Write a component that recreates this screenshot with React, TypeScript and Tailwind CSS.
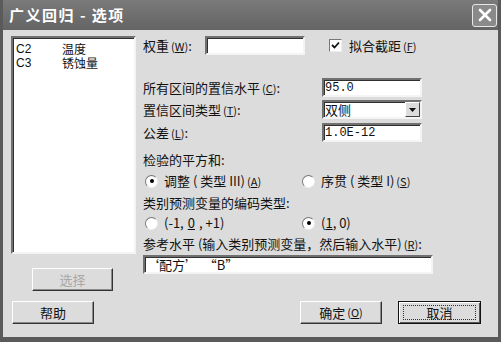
import React from "react";

const font = { fontFamily: '"Noto Sans CJK SC", "Liberation Sans", sans-serif' };

function M({ k }: { k: string }) {
  return (
    <span className="text-[11px] ml-[2px]">
      (<span className="underline">{k}</span>)
    </span>
  );
}

function Sunken({ className = "", children }: { className?: string; children?: React.ReactNode }) {
  return (
    <div
      className={
        "bg-white border-2 border-t-[#707070] border-l-[#707070] border-b-[#f4f4f4] border-r-[#f4f4f4] shadow-[inset_1px_1px_0_#303030] flex items-center " +
        className
      }
    >
      {children}
    </div>
  );
}

function Btn({ children, className = "", def = false, disabled = false }: { children: React.ReactNode; className?: string; def?: boolean; disabled?: boolean }) {
  return (
    <div
      className={
        "h-[23px] flex items-center justify-center text-[13px] bg-[#dcdcdc] " +
        (def
          ? "border border-[#111] shadow-[inset_1px_1px_0_#fff,inset_-1px_-1px_0_#555] "
          : "border border-t-white border-l-white border-b-[#333] border-r-[#333] shadow-[inset_-1px_-1px_0_#8a8a8a] ") +
        (disabled ? "text-[#a8a8a8] " : "text-[#111] ") +
        className
      }
    >
      {def ? (
        <div className="w-[calc(100%-8px)] h-[15px] border border-dotted border-[#333] flex items-center justify-center">{children}</div>
      ) : (
        children
      )}
    </div>
  );
}

function Radio({ on }: { on: boolean }) {
  return (
    <div className="w-[13px] h-[13px] rounded-full bg-white border border-t-[#777] border-l-[#777] border-b-[#eee] border-r-[#eee] flex items-center justify-center mr-[6px]">
      {on && <div className="w-[4px] h-[4px] rounded-full bg-black" />}
    </div>
  );
}

export default function App() {
  return (
    <div className="w-[501px] h-[342px] bg-[#5a5a5a] flex flex-col px-[3px] pb-[5px] text-[#111]" style={font}>
      <div className="h-[30px] shrink-0 flex items-center justify-between pl-[6px] pr-[1px] bg-[linear-gradient(#7a7a7a,#646464)]">
        <span className="text-white text-[15px] font-bold tracking-[1.5px]">广义回归 - 选项</span>
        <div className="w-[25px] h-[23px] rounded-[3px] border border-[#e8e8e8] bg-[#8a8a8a] flex items-center justify-center">
          <svg width="14" height="14" viewBox="0 0 14 14">
            <path d="M2 2 L12 12 M12 2 L2 12" stroke="white" strokeWidth="2.6" strokeLinecap="round" />
          </svg>
        </div>
      </div>
      <div className="flex-1 bg-[#dcdcdc] flex flex-col text-[13px]">
        <div className="flex">
          <div className="flex flex-col pl-[8px] pt-[6px]">
            <Sunken className="w-[125px] h-[218px] !items-start !justify-start flex-col text-[12px] leading-[14px] pt-[4px] pl-[3px]">
              <div className="flex h-[14px]"><span className="w-[46px]" style={{ fontFamily: '"Liberation Sans", sans-serif' }}>C2</span><span>温度</span></div>
              <div className="flex h-[14px]"><span className="w-[46px]" style={{ fontFamily: '"Liberation Sans", sans-serif' }}>C3</span><span>锈蚀量</span></div>
            </Sunken>
            <Btn disabled className="w-[81px] mt-[14px] ml-[21px]">选择</Btn>
          </div>
          <div className="flex flex-col pl-[7px] pt-[6px] w-[345px]">
            <div className="flex items-center h-[19px]">
              <span className="w-[62px]">权重<M k="W" />:</span>
              <Sunken className="w-[100px] h-[19px]" />
              <div className="ml-[24px] w-[13px] h-[13px] bg-white border border-t-[#777] border-l-[#777] border-b-[#eee] border-r-[#eee] flex items-center justify-center">
                <svg width="9" height="9" viewBox="0 0 9 9"><path d="M1 4 L3.5 6.5 L8 1.5" stroke="#111" strokeWidth="1.8" fill="none" /></svg>
              </div>
              <span className="ml-[7px]">拟合截距<M k="F" /></span>
            </div>
            <div className="flex items-center h-[19px] mt-[23px]">
              <span className="w-[179px]">所有区间的置信水平<M k="C" />:</span>
              <Sunken className="w-[100px] h-[19px] text-[12px] pl-[1px]"><span style={{ fontFamily: '"Liberation Mono", monospace' }}>95.0</span></Sunken>
            </div>
            <div className="flex items-center h-[19px] mt-[3px]">
              <span className="w-[179px]">置信区间类型<M k="T" />:</span>
              <Sunken className="w-[100px] h-[19px] justify-between pl-[1px]">
                <span className="text-[13px]">双侧</span>
                <div className="w-[15px] h-[15px] bg-[#dcdcdc] border border-t-white border-l-white border-b-[#444] border-r-[#444] flex items-center justify-center">
                  <svg width="7" height="4" viewBox="0 0 7 4"><path d="M0 0 H7 L3.5 4 Z" fill="#111" /></svg>
                </div>
              </Sunken>
            </div>
            <div className="flex items-center h-[19px] mt-[4px]">
              <span className="w-[179px]">公差<M k="L" />:</span>
              <Sunken className="w-[100px] h-[19px] text-[12px] pl-[1px]"><span style={{ fontFamily: '"Liberation Mono", monospace' }}>1.0E-12</span></Sunken>
            </div>
            <div className="h-[16px] mt-[10px] flex items-center">检验的平方和:</div>
            <div className="flex items-center h-[18px] mt-[4px]">
              <div className="flex items-center w-[159px] pl-[2px]"><Radio on />调整 ( 类型 III)<M k="A" /></div>
              <div className="flex items-center"><Radio on={false} />序贯 ( 类型 I)<M k="S" /></div>
            </div>
            <div className="h-[16px] mt-[5px] flex items-center">类别预测变量的编码类型:</div>
            <div className="flex items-center h-[18px] mt-[3px]">
              <div className="flex items-center w-[159px] pl-[2px]"><Radio on={false} />(-1, <span className="underline mx-[4px]">0</span>, +1)</div>
              <div className="flex items-center"><Radio on />(<span className="underline">1</span>, 0)</div>
            </div>
            <div className="h-[16px] mt-[4px] flex items-center">参考水平 (输入类别预测变量，然后输入水平)<M k="R" />:</div>
            <Sunken className="w-[290px] h-[19px] mt-[3px] pl-[1px] text-[13px]">‘配方’&nbsp;&nbsp;“B”</Sunken>
          </div>
        </div>
        <div className="flex items-center mt-[10px] pl-[9px]">
          <Btn className="w-[82px]">帮助</Btn>
          <Btn className="w-[82px] ml-[206px]">确定<M k="O" /></Btn>
          <Btn def className="w-[83px] ml-[16px]">取消</Btn>
        </div>
      </div>
    </div>
  );
}
